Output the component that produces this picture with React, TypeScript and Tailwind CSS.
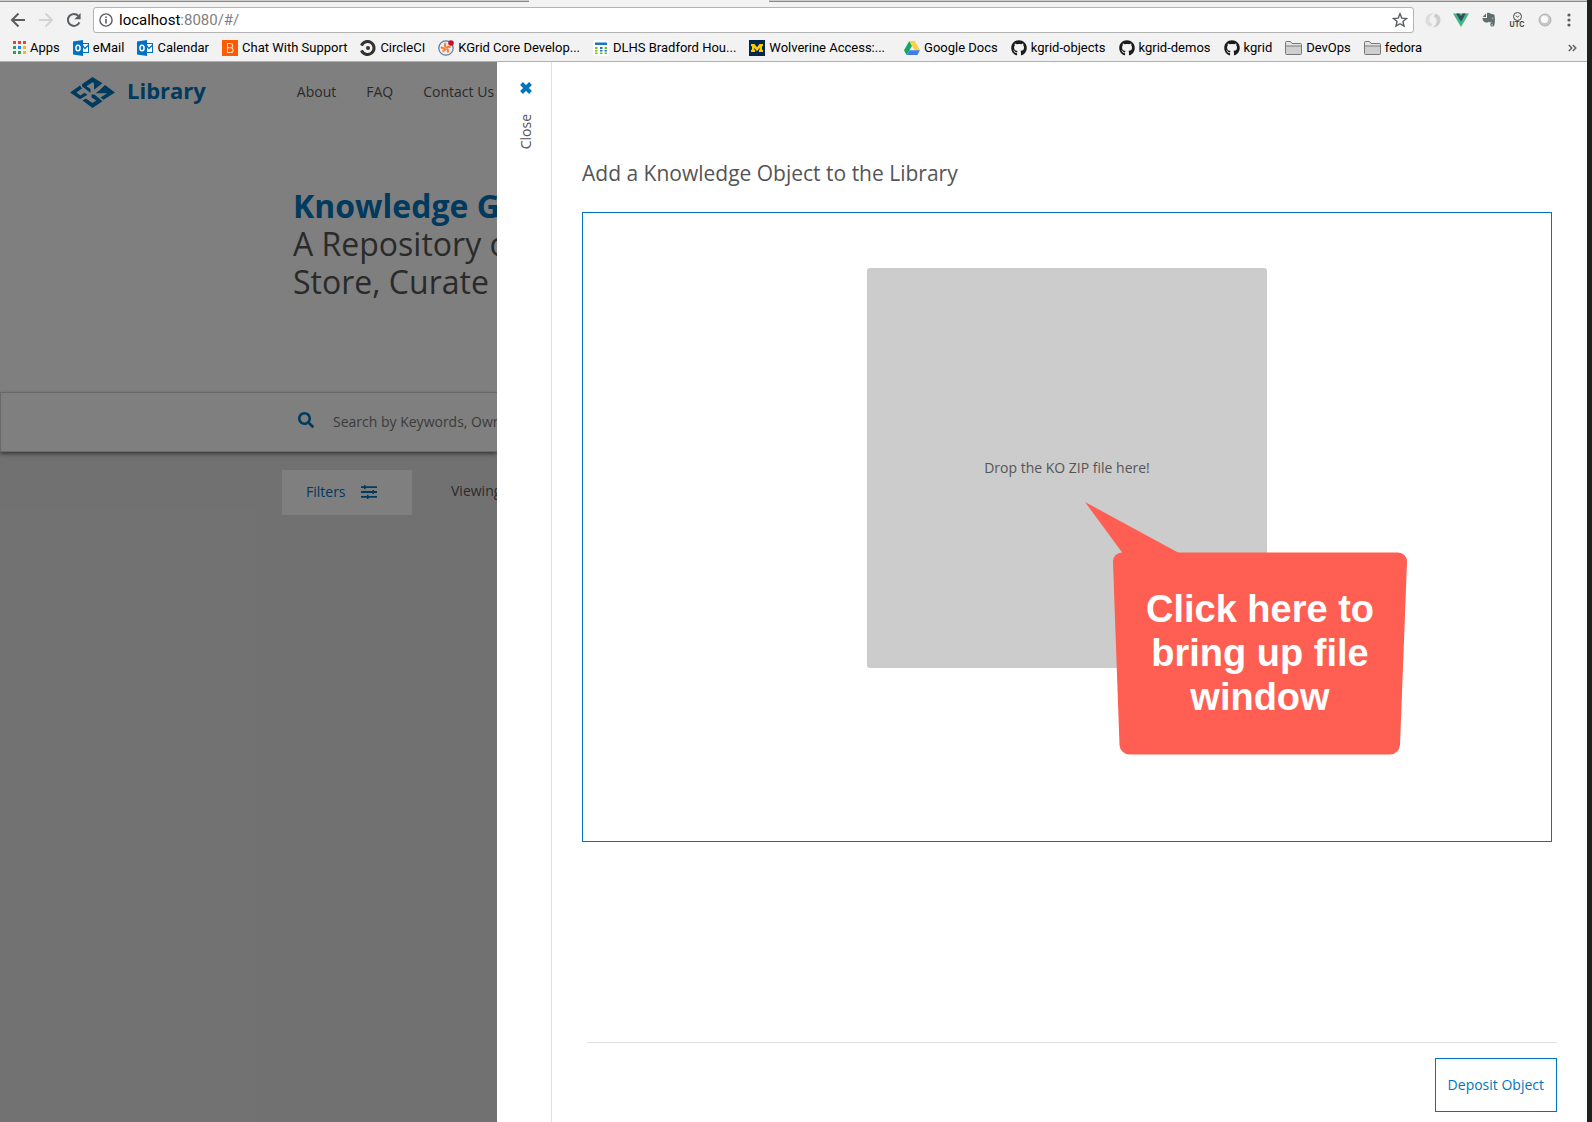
import type { ReactNode } from 'react';
import { FaSearch, FaGithub } from 'react-icons/fa';

const Arrow = ({ forward = false }: { forward?: boolean }) => (
  <svg width="16" height="16" viewBox="0 0 16 16" fill="none" stroke={forward ? '#d4d4d4' : '#5a5d61'} strokeWidth="2" className={forward ? 'rotate-180' : ''}>
    <path d="M15 8H2.5M8.5 1.5L2 8l6.5 6.5" />
  </svg>
);

const Reload = () => (
  <svg width="16" height="16" viewBox="0 0 16 16">
    <path d="M13.4 10.300A6 6 0 1 1 12.400 3.900" fill="none" stroke="#5a5d61" strokeWidth="2" />
    <path d="M14.600 1v6.200H8.400z" fill="#5a5d61" />
  </svg>
);

const Info = () => (
  <svg width="14" height="14" viewBox="0 0 14 14">
    <circle cx="7" cy="7" r="6.1" fill="none" stroke="#5a5d61" strokeWidth="1.4" />
    <path d="M6.2 6h1.6v4.5H6.2zM6.2 3.500h1.6V5H6.2z" fill="#5a5d61" />
  </svg>
);

const Star = () => (
  <svg width="16" height="16" viewBox="0 0 16 16" fill="none" stroke="#5a5d61" strokeWidth="1.4">
    <path d="M8 1.800l1.800 4.300 4.700.4-3.600 3 1.100 4.600L8 11.700l-4 2.400 1.100-4.600-3.600-3 4.700-.4z" />
  </svg>
);

const AppsIcon = () => (
  <svg width="13" height="13" viewBox="0 0 13 13">
    <path d="M0 0h3v3H0zM5 0h3v3H5zM10 0h3v3h-3z" fill="#ea4335" />
    <path d="M0 5h3v3H0z" fill="#34a053" />
    <path d="M5 5h3v3H5z" fill="#1a82f7" />
    <path d="M10 5h3v3h-3z" fill="#fbb41a" />
    <path d="M0 10h3v3H0zM5 10h3v3H5z" fill="#34a053" />
    <path d="M10 10h3v3h-3z" fill="#fbb41a" />
  </svg>
);

const Outlook = () => (
  <svg width="16" height="16" viewBox="0 0 16 16">
    <rect x="8.500" y="3.500" width="7" height="9" fill="#fff" stroke="#0072c6" />
    <path d="M9 5l3 3.500L15.500 5" fill="none" stroke="#0072c6" strokeWidth="1.200" />
    <path d="M0 1.500L10 0v16L0 14.500z" fill="#0072c6" />
    <ellipse cx="5" cy="8" rx="2.100" ry="2.800" fill="none" stroke="#fff" strokeWidth="1.500" />
  </svg>
);

const Support = () => (
  <svg width="16" height="16" viewBox="0 0 16 16">
    <rect width="16" height="16" fill="#ff5a00" />
    <path d="M5.500 3.500h3a2 2 0 0 1 0 4.300h-3zM5.500 7.800h3.300a2.300 2.300 0 0 1 0 4.700H5.500z" fill="none" stroke="#ffd9c4" strokeWidth="1.100" />
  </svg>
);

const CircleCi = () => (
  <svg width="16" height="16" viewBox="0 0 16 16">
    <path d="M1.500 5.600A6.500 6.500 0 1 1 1.500 10.400" fill="none" stroke="#333" strokeWidth="3" />
    <circle cx="8" cy="8" r="2" fill="#333" />
  </svg>
);

const KGridIcon = () => (
  <svg width="16" height="16" viewBox="0 0 16 16">
    <circle cx="8" cy="8" r="7.200" fill="#f6ece4" stroke="#4f7ea8" strokeWidth="1.200" />
    <path d="M8 7.500Q6 5.500 7.500 3M8.500 8Q10.500 6 12.500 7.500M8.500 8.500Q11 10 9.500 12.500M7.500 8.500Q7 11 4.500 11.500M7 8Q5 9 3 7" stroke="#f08040" strokeWidth="1.900" fill="none" />
    <circle cx="13" cy="3" r="2.800" fill="#c8102e" />
  </svg>
);

const Dlhs = () => (
  <svg width="16" height="16" viewBox="0 0 16 16">
    <rect width="16" height="16" rx="2" fill="#fff" />
    <path d="M2 2.500h12V5H2z" fill="#1b75bb" />
    <path d="M2 7h2.500v2H2zM11.500 7H14v2h-2.500zM2 10h2.500v1.500H2zM2 12.500h2.500V14H2zM7 12.500h2.500V14H7zM11.500 12.500H14V14h-2.500z" fill="#78be20" />
    <path d="M7 7h2.500v2H7zM7 10h2.500v1.500H7zM11.500 10H14v1.500h-2.500z" fill="#1b75bb" />
  </svg>
);

const Michigan = () => (
  <svg width="16" height="16" viewBox="0 0 16 16">
    <rect width="16" height="16" fill="#00274c" />
    <path d="M2 4h3.500L8 7.300 10.500 4H14v2.300h-1v3.400h1V12h-4V9.700h.8V7.800L8 11.300 5.200 7.800v1.900H6V12H2V9.700h1V6.300H2z" fill="#ffcb05" />
  </svg>
);

const Drive = () => (
  <svg width="16" height="16" viewBox="0 0 16 16">
    <path d="M5.300 1L0 10.200 2.600 15l5.400-9.300z" fill="#11a861" />
    <path d="M5.300 1h5.400L16 10.200h-5.400z" fill="#ffcf44" />
    <path d="M5.300 10.200H16L13.400 15H2.600z" fill="#3f7ee8" />
  </svg>
);

const Folder = () => (
  <svg width="17" height="14" viewBox="0 0 17 14">
    <path d="M.5 12.500v-11a1 1 0 0 1 1-1h4l1.500 2h8.500a1 1 0 0 1 1 1v9a1 1 0 0 1-1 1h-14a1 1 0 0 1-1-1z" fill="#e4e4e4" stroke="#777" />
    <path d="M1 5.500h15v7.500H1z" fill="#cfcfcf" />
    <path d="M1 5h15" stroke="#777" />
  </svg>
);

const Github = () => <FaGithub size={16} color="#1b1b1b" />;

const bookmarks: { label: string; icon: ReactNode; wide?: boolean }[] = [
  { label: 'Apps', icon: <AppsIcon /> },
  { label: 'eMail', icon: <Outlook /> },
  { label: 'Calendar', icon: <Outlook /> },
  { label: 'Chat With Support', icon: <Support /> },
  { label: 'CircleCI', icon: <CircleCi /> },
  { label: 'KGrid Core Develop...', icon: <KGridIcon /> },
  { label: 'DLHS Bradford Hou...', icon: <Dlhs /> },
  { label: 'Wolverine Access:...', icon: <Michigan />, wide: true },
  { label: 'Google Docs', icon: <Drive /> },
  { label: 'kgrid-objects', icon: <Github /> },
  { label: 'kgrid-demos', icon: <Github /> },
  { label: 'kgrid', icon: <Github /> },
  { label: 'DevOps', icon: <Folder /> },
  { label: 'fedora', icon: <Folder /> },
];

const Swirl = () => (
  <svg width="16" height="16" viewBox="0 0 16 16">
    <path d="M8.500 1C3.500 1 .5 4.500.5 8.500c0 3 2 5.500 5 6.500L7.500 12C4.500 11 4 8.500 4.500 6.500 5 4 6.500 2.500 8.500 1z" fill="#dcdcdc" />
    <path d="M7.500 15.500c5 0 8-3.500 8-7.500 0-3-2-5.500-5-6.500L8.500 4.500c3 1 3.500 3.500 3 5.500-.5 2.500-2 4-4 5.500z" fill="#cdcdcd" />
  </svg>
);

const Vue = () => (
  <svg width="16" height="16" viewBox="0 0 16 16">
    <path d="M0 1.500h16L8 15z" fill="#41b883" />
    <path d="M3.200 1.500h3L8 4.200l1.800-2.700h3L8 9.800z" fill="#35495e" />
  </svg>
);

const Evernote = () => (
  <svg width="16" height="16" viewBox="0 0 16 16">
    <path d="M5 1.500L1.500 5H5zM6 1c1.500-.4 3 0 3.400.8 2 .2 3.800.3 4.100 1.500.7 3 .6 7.700-.3 10.200-.7 1.600-4 1.300-4-.8 0-1.900 1.800-2.200 2.600-1.500-.1-.4-.4-.6-1-.6-1.400 0-2.300-.2-2.800-1.100-.3 1-1.600 1.300-3 1C2.800 10 1.600 8.500 1.400 6H6z" fill="#5f6f70" />
    <path d="M10.300 12.700c.2.700 1 .7 1.500.2" stroke="#f2f2f2" fill="none" />
    <path d="M10.800 6.500c.5-.5 1.200-.4 1.500.2" stroke="#f2f2f2" fill="none" strokeWidth=".8" />
  </svg>
);

const Clock = () => (
  <svg width="9" height="9" viewBox="0 0 9 9" fill="none" stroke="#444">
    <circle cx="4.500" cy="4.500" r="4" />
    <path d="M2.700 3.800L4.500 5l1.800-1.200" strokeWidth=".9" />
  </svg>
);

const Sphere = () => (
  <svg width="14" height="14" viewBox="0 0 14 14">
    <circle cx="7" cy="7" r="6" fill="#c6c6c6" stroke="#b2b2b2" />
    <circle cx="6.500" cy="6.300" r="3.700" fill="#fafafa" />
  </svg>
);

const Dots = () => (
  <svg width="4" height="14" viewBox="0 0 4 14" fill="#5a5d61">
    <circle cx="2" cy="2" r="1.600" />
    <circle cx="2" cy="7" r="1.600" />
    <circle cx="2" cy="12" r="1.600" />
  </svg>
);

const Logo = () => (
  <svg width="45" height="31" viewBox="0 0 45 31" fill="#0075bc">
    <path d="M22.500 0L32.500 6.300 24 12.800V6.200L22.500 5.200 16.500 9.200 20.500 12V16L12.300 9.600 11.800 7.200z" />
    <path d="M35 8L45 15.500 33.500 22.800 30.500 20.500 37.300 16.300H25.500L29.800 13z" />
    <path d="M10 8.600L12 11.500 6.300 15.500 10.500 18.400 14.500 15.800 17.500 17.800 10 22.300 0 15.500z" />
    <path d="M12.500 23.500L15.800 21.400 22.500 26 26.200 23.500 21.500 20.500V17.500H24.500L32.500 24.300 22.500 31z" />
  </svg>
);

const Sliders = () => (
  <svg width="16" height="14" viewBox="0 0 16 14" fill="#0075bc">
    <path d="M0 1.200h16v1.800H0zM0 6.100h16v1.800H0zM0 11h16v1.800H0zM3 0h1.500v4.200H3zM11.500 4.900H13v4.200h-1.500zM6 9.800h1.500V14H6z" />
  </svg>
);

const Cross = () => (
  <svg width="12" height="12" viewBox="0 0 12 12" stroke="#0075bc" strokeWidth="4" strokeLinecap="butt">
    <path d="M1.500 1.500l9 9M10.500 1.500l-9 9" />
  </svg>
);

function BrowserBar() {
  return (
    <header className="border-b border-[#b0b0b0] bg-[#f2f2f2] text-black">
      <div className="flex h-[2px]">
        <div className="w-1/3 border-b border-[#8c8a89] bg-[#cfcdcb]" />
        <div className="w-60" />
        <div className="flex-1 border-b border-[#8c8a89] bg-[#cfcdcb]" />
      </div>
      <div className="flex items-center pt-[5px] pr-4 pl-[10px]">
        <nav className="flex w-[83px] items-center gap-3">
          <button aria-label="Back"><Arrow /></button>
          <button aria-label="Forward"><Arrow forward /></button>
          <button aria-label="Reload"><Reload /></button>
        </nav>
        <div className="flex h-[26px] flex-1 items-center rounded-[3px] border border-[#b4b4b4] bg-white px-[5px] font-['Roboto',sans-serif] text-[15px]">
          <Info />
          <a href="#/" className="ml-[6px] flex-1">localhost<span className="text-[#808080]">:8080/#/</span></a>
          <button aria-label="Bookmark this page"><Star /></button>
        </div>
        <div className="ml-[11px] flex items-center gap-3">
          <button aria-label="Swirl extension"><Swirl /></button>
          <button aria-label="Vue extension"><Vue /></button>
          <button aria-label="Evernote extension"><Evernote /></button>
          <button className="flex w-4 flex-col items-center font-['Inter',sans-serif] text-[7px] leading-[8px] font-bold text-[#444]"><Clock />UTC</button>
          <button aria-label="Sphere extension" className="flex w-4 justify-center"><Sphere /></button>
          <button aria-label="Menu" className="ml-[2px]"><Dots /></button>
        </div>
      </div>
      <nav className="flex h-7 items-center gap-[13px] pt-px pr-[10px] pl-[13px] font-['Roboto',sans-serif] text-[13px] whitespace-nowrap">
        {bookmarks.map((b) => (
          <a key={b.label} href="#/" className={b.wide ? 'mr-[6px] flex items-center gap-1' : 'flex items-center gap-1'}>
            {b.icon}
            {b.label}
          </a>
        ))}
        <button aria-label="More bookmarks" className="ml-auto">
          <svg width="9" height="8" viewBox="0 0 9 8" fill="none" stroke="#5a5d61" strokeWidth="1.400">
            <path d="M.8 1l3 3-3 3M4.800 1l3 3-3 3" />
          </svg>
        </button>
      </nav>
    </header>
  );
}

function LibraryPage() {
  return (
    <div className="relative flex w-[497px] shrink-0 flex-col overflow-hidden bg-[#e3e3e3] whitespace-nowrap">
      <div className="bg-white pb-[91px]">
        <div className="flex h-[60px] items-center pl-[70px]">
          <a href="#/" className="flex items-center gap-3 text-[22px] leading-8 font-bold text-[#0075bc]">
            <Logo />
            <span className="pb-1">Library</span>
          </a>
          <nav className="ml-[91px] flex gap-[30px] text-sm text-[#555]">
            <a href="#/">About</a>
            <a href="#/">FAQ</a>
            <a href="#/">Contact Us</a>
          </nav>
        </div>
        <h1 className="mt-[65px] pl-[293px] text-[32px] leading-[38px] text-[#555]">
          <strong className="block font-bold text-[#0075bc]">Knowledge G</strong>
          A Repository o<br />Store, Curate
        </h1>
      </div>
      <label className="flex h-[60px] items-center gap-[19px] border border-r-0 border-[#d2d2d2] bg-white pl-[297px] shadow-[0_2px_4px_rgba(0,0,0,0.5)]">
        <FaSearch size={16} color="#0075bc" className="mb-1 shrink-0" />
        <input type="search" aria-label="Search" placeholder="Search by Keywords, Own" className="w-60 shrink-0 text-sm outline-none placeholder:text-[#777]" />
      </label>
      <div className="mt-[18px] flex items-center gap-[39px] pl-[282px] text-sm text-[#555]">
        <button className="flex h-[45px] w-[130px] shrink-0 items-center gap-[15px] bg-white pb-[2px] pl-6 text-[#0075bc]">Filters <Sliders /></button>
        <span className="pb-[3px]">Viewing</span>
      </div>
      <div className="absolute inset-0 bg-black/50" />
    </div>
  );
}

function Callout() {
  return (
    <div className="pointer-events-none absolute top-[234px] left-[246px] flex h-[253px] w-[294px] items-center justify-center pt-12">
      <svg className="absolute inset-0" width="294" height="253" viewBox="0 0 294 253" fill="#ff5e52">
        <path d="M9 50.500A9 9 0 0 0 0 60L6.500 243A10 10 0 0 0 16.500 252.500H277A10 10 0 0 0 287 243L294 60A9 9 0 0 0 285 50.500z" />
      </svg>
      <svg className="absolute top-0 -left-7" width="100" height="53" viewBox="0 0 100 53" fill="#ff5e52">
        <path d="M0 0L39 53H97L93 50.500z" />
      </svg>
      <p className="relative text-center font-['Liberation_Sans',sans-serif] text-[38px] leading-[44px] font-bold text-white">
        Click here to<br />bring up file<br />window
      </p>
    </div>
  );
}

function DepositDrawer() {
  return (
    <section className="flex flex-1 bg-white text-[#555]">
      <button className="flex w-[55px] flex-col items-center gap-5 border-r border-[#e0e0e0] pt-5 pl-1 text-sm">
        <Cross />
        <span className="rotate-180 [writing-mode:vertical-rl]">Close</span>
      </button>
      <div className="flex flex-1 flex-col pr-[30px] pb-[10px] pl-[30px]">
        <h2 className="mt-[95px] text-[21px] leading-8">Add a Knowledge Object to the Library</h2>
        <div className="mt-[23px] mr-[5px] flex h-[630px] justify-center border border-[#0075bc] pt-[55px]">
          <div className="relative size-[400px]">
            <button className="flex size-full items-center justify-center rounded-[3px] bg-[#ccc] text-sm">Drop the KO ZIP file here!</button>
            <Callout />
          </div>
        </div>
        <div className="mt-auto ml-[5px] flex justify-end border-t border-[#e0e0e0] pt-[15px]">
          <button className="h-[54px] border border-[#0075bc] px-3 text-sm text-[#0075bc]">Deposit Object</button>
        </div>
      </div>
    </section>
  );
}

export default function App() {
  return (
    <div className="flex min-h-screen bg-[#1f2121]">
      <div className="mr-[5px] flex flex-1 flex-col">
        <BrowserBar />
        <main className="flex flex-1 font-['Open_Sans',sans-serif]">
          <LibraryPage />
          <DepositDrawer />
        </main>
      </div>
    </div>
  );
}
